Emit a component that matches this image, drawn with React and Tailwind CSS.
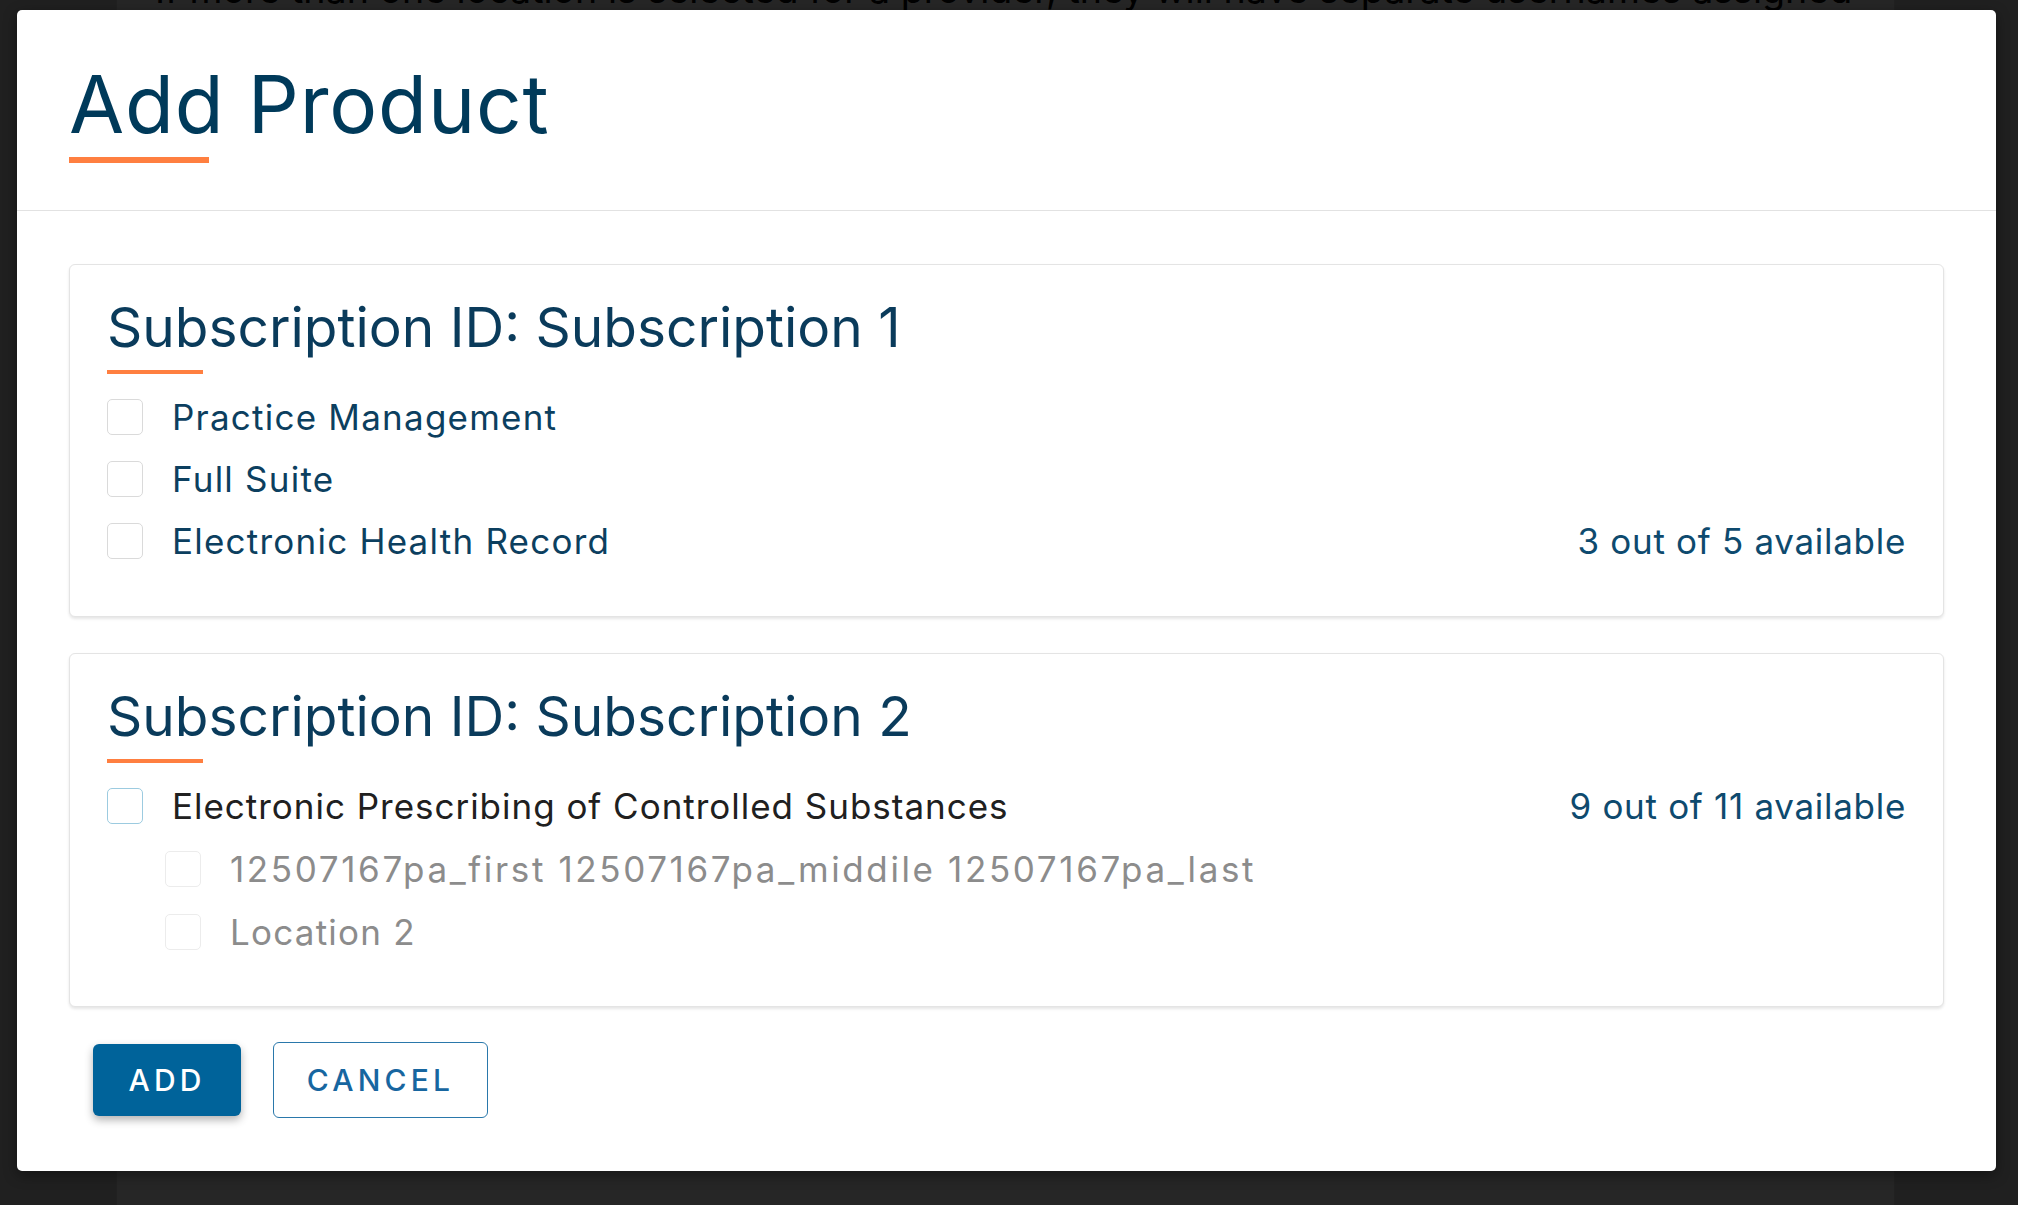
import React from 'react';

function Box({ tone = 'default' }) {
  const border =
    tone === 'focus'
      ? 'border-[#9ccbe0]'
      : tone === 'muted'
      ? 'border-[#ececec]'
      : 'border-[#dadada]';
  return <span className={`block w-[36px] h-[36px] shrink-0 rounded-[5px] border bg-white ${border}`} />;
}

function Row({ label, count, tone, labelClass = 'text-[#0c3f5f] tracking-[0.035em]', indent = false }) {
  return (
    <div className={`flex items-center justify-between h-[36px] ${indent ? 'pl-[58px]' : ''}`}>
      <div className="flex items-center gap-[29px]">
        <Box tone={tone} />
        <span className={`text-[35px] leading-none ${labelClass}`}>{label}</span>
      </div>
      {count && <span className="text-[35px] leading-none tracking-[0.02em] text-[#0e4a6e]">{count}</span>}
    </div>
  );
}

function SubscriptionCard({ title, gap = 'gap-[26px]', pb = 'pb-[57px]', children }) {
  return (
    <section className={`border border-[#e4e4e4] rounded-[6px] bg-white shadow-[0_2px_3px_rgba(0,0,0,0.10)] px-[37px] pt-[35px] ${pb}`}>
      <h2 className="text-[55px] leading-none font-normal text-[#0a3b5b]">{title}</h2>
      <div className="mt-[15px] h-[4px] w-[96px] bg-[#ff7f40]" />
      <div className={`mt-[25px] flex flex-col ${gap}`}>{children}</div>
    </section>
  );
}

export default function App() {
  return (
    <div className="relative w-[2018px] h-[1205px] overflow-hidden bg-[#d6d6d6] font-[Inter,sans-serif]">
      {/* page behind the dialog */}
      <div className="flex h-full">
        <aside className="w-[116px] shrink-0" />
        <main className="w-[1779px] shrink-0 bg-white border-x border-[#dcdcdc] pl-[38px]">
          <p className="-mt-[29px] text-[37.6px] leading-none text-black whitespace-nowrap">
            If more than one location is selected for a provider, they will have separate usernames assigned
          </p>
        </main>
      </div>

      {/* overlay */}
      <div className="absolute inset-0 bg-black/85" />

      {/* dialog */}
      <div className="absolute left-[17px] top-[10px] w-[1979px] bg-white rounded-[5px] shadow-[0_4px_14px_rgba(0,0,0,0.4)]">
        <header className="px-[52px] pt-[54px] pb-[47px] border-b border-[#e2e2e2]">
          <h1 className="text-[80px] leading-none font-normal tracking-[0.01em] text-[#003a5a]">Add Product</h1>
          <div className="mt-[13px] h-[6px] w-[140px] bg-[#ff7f40]" />
        </header>

        <div className="px-[52px] pt-[53px] pb-[53px]">
          <div className="flex flex-col gap-[36px]">
            <SubscriptionCard title="Subscription ID: Subscription 1">
              <Row label="Practice Management" />
              <Row label="Full Suite" />
              <Row label="Electronic Health Record" count="3 out of 5 available" />
            </SubscriptionCard>

            <SubscriptionCard title="Subscription ID: Subscription 2" gap="gap-[27px]" pb="pb-[56px]">
              <Row
                label="Electronic Prescribing of Controlled Substances"
                count="9 out of 11 available"
                tone="focus"
                labelClass="text-[#202020] tracking-[0.028em]"
              />
              <Row
                label="12507167pa_first 12507167pa_middile 12507167pa_last"
                tone="muted"
                labelClass="text-[#8c8c8c] tracking-[0.075em]"
                indent
              />
              <Row
                label="Location 2"
                tone="muted"
                labelClass="text-[#8c8c8c] tracking-[0.035em]"
                indent
              />
            </SubscriptionCard>
          </div>

          <div className="mt-[35px] ml-[24px] flex items-center gap-[32px]">
            <button className="w-[148px] h-[72px] rounded-[6px] bg-[#00639a] text-white text-[30px] font-medium tracking-[0.14em] shadow-[0_4px_8px_rgba(0,0,0,0.3)]">
              ADD
            </button>
            <button className="w-[215px] h-[76px] rounded-[6px] border border-[#2a78ab] bg-white text-[#1766a0] text-[30px] font-medium tracking-[0.14em]">
              CANCEL
            </button>
          </div>
        </div>
      </div>
    </div>
  );
}
